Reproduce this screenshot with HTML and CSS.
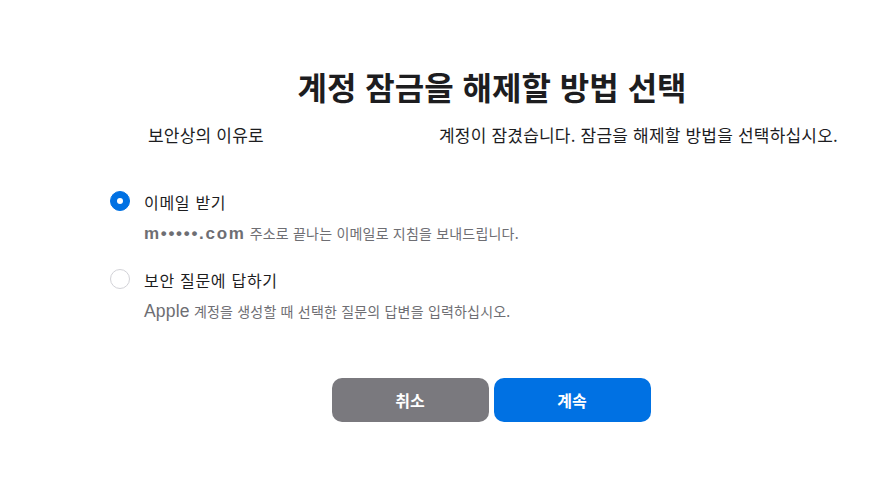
FILE: index.html
```
<!DOCTYPE html>
<html lang="ko">
<head>
<meta charset="utf-8">
<link rel="stylesheet" href="styles.css">
</head>
<body>
<main class="page">
  <h1 class="title">계정 잠금을 해제할 방법 선택</h1>
  <p class="subtitle"><span>보안상의 이유로</span><span>계정이 잠겼습니다. 잠금을 해제할 방법을 선택하십시오.</span></p>
  <div class="options">
    <div class="option">
      <span class="radio checked"></span>
      <div class="option-body">
        <div class="option-label">이메일 받기</div>
        <div class="option-desc"><span class="email">m•••••.com</span> 주소로 끝나는 이메일로 지침을 보내드립니다.</div>
      </div>
    </div>
    <div class="option">
      <span class="radio"></span>
      <div class="option-body">
        <div class="option-label">보안 질문에 답하기</div>
        <div class="option-desc"><span class="latin">Apple</span> 계정을 생성할 때 선택한 질문의 답변을 입력하십시오.</div>
      </div>
    </div>
  </div>
  <div class="actions">
    <button class="btn btn-cancel">취소</button>
    <button class="btn btn-continue">계속</button>
  </div>
</main>
</body>
</html>
```
FILE: styles.css
```
* { box-sizing: border-box; }
html, body { margin: 0; padding: 0; background: #fff; }
body {
  font-family: "Noto Sans CJK KR", "Noto Sans", sans-serif;
  color: #1d1d1f;
}
.page {
  width: 764px;
  margin-left: 110px;
  padding-top: 62px;
}
.title {
  margin: 0;
  text-align: center;
  font-size: 32px;
  font-weight: 700;
  line-height: 48px;
}
.subtitle {
  margin: 13px 36px 0 38px;
  display: flex;
  justify-content: space-between;
  font-size: 17px;
  letter-spacing: 0.2px;
  line-height: 24px;
}
.options {
  margin-top: 44px;
  display: flex;
  flex-direction: column;
  gap: 25px;
}
.option {
  display: flex;
  gap: 14px;
  align-items: flex-start;
}
.radio {
  flex: none;
  width: 20px;
  height: 20px;
  border-radius: 50%;
  border: 1px solid #d2d2d7;
  margin-top: 0;
  position: relative;
}
.radio.checked {
  background: #0071e3;
  border-color: #0071e3;
}
.radio.checked::after {
  content: "";
  position: absolute;
  left: 50%;
  top: 50%;
  width: 6px;
  height: 6px;
  margin: -3px 0 0 -3px;
  border-radius: 50%;
  background: #fff;
}
.option-label {
  font-size: 16px;
  letter-spacing: 0.7px;
  line-height: 22px;
}
.option-desc {
  margin-top: 9px;
  font-size: 14px;
  letter-spacing: 0.2px;
  line-height: 22px;
  color: #6e6e73;
}
.email {
  font-family: "Liberation Sans", Arial, sans-serif;
  font-size: 17px;
  font-weight: 700;
  letter-spacing: 1.7px;
  line-height: 1;
}
.latin {
  font-family: "Liberation Sans", Arial, sans-serif;
  font-size: 17.5px;
  letter-spacing: 0.2px;
  line-height: 1;
}
.actions {
  margin-top: 56px;
  display: flex;
  justify-content: center;
  gap: 5px;
  padding-right: 2px;
}
.btn {
  width: 157px;
  height: 44px;
  border: none;
  border-radius: 10px;
  color: #fff;
  font-family: "Noto Sans CJK KR", sans-serif;
  font-size: 16px;
  font-weight: 700;
}
.btn-cancel { background: #7a797e; }
.btn-continue { background: #0071e3; }
```
